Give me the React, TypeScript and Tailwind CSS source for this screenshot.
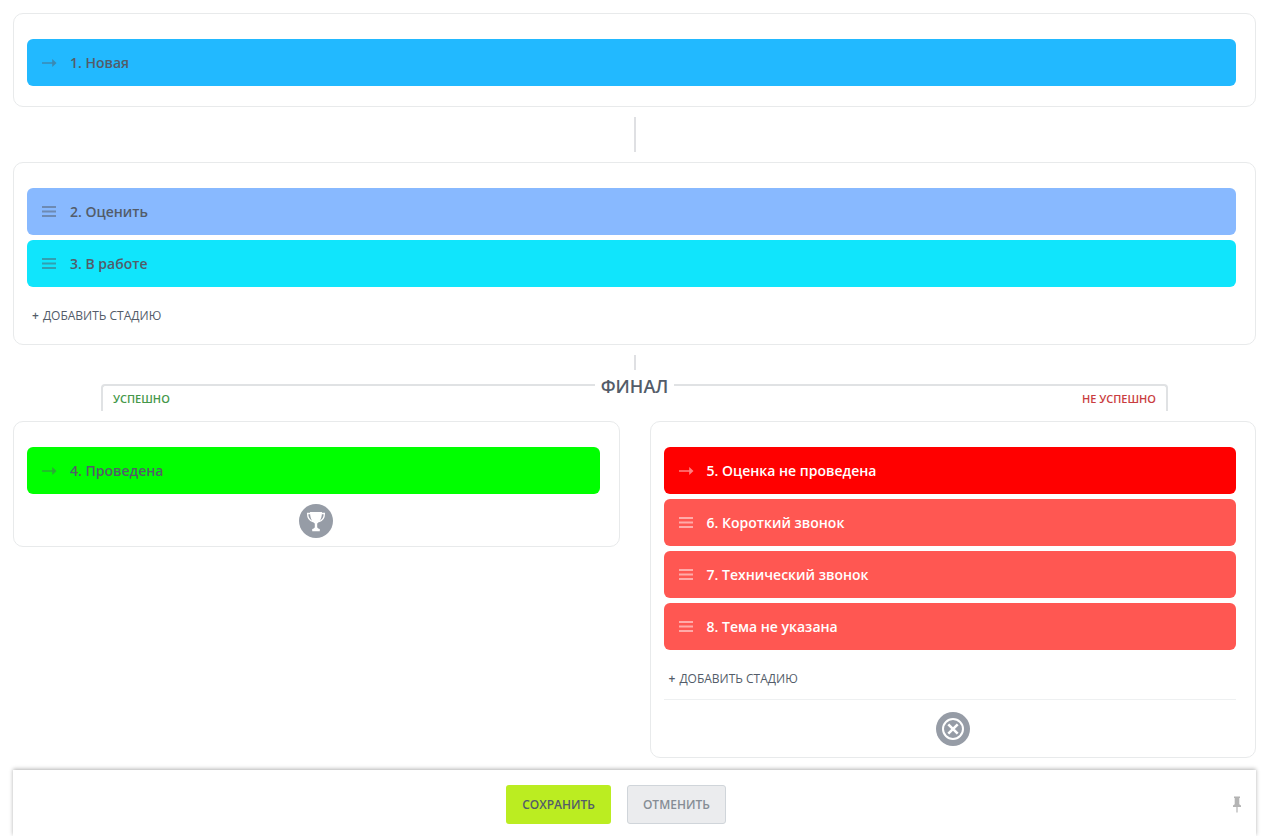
import type { ReactNode } from 'react';

type Stage = {
  id: number;
  name: string;
  fixed?: boolean;
  bg: string;
  light?: boolean;
};

const initialStages: Stage[] = [{ id: 1, name: 'Новая', fixed: true, bg: 'bg-[#22b9ff]' }];

const progressStages: Stage[] = [
  { id: 2, name: 'Оценить', bg: 'bg-[#88b9ff]' },
  { id: 3, name: 'В работе', bg: 'bg-[#10e5fc]' },
];

const successStages: Stage[] = [{ id: 4, name: 'Проведена', fixed: true, bg: 'bg-[#00ff00]' }];

const failStages: Stage[] = [
  { id: 5, name: 'Оценка не проведена', fixed: true, bg: 'bg-[#ff0000]', light: true },
  { id: 6, name: 'Короткий звонок', bg: 'bg-[#ff5752]', light: true },
  { id: 7, name: 'Технический звонок', bg: 'bg-[#ff5752]', light: true },
  { id: 8, name: 'Тема не указана', bg: 'bg-[#ff5752]', light: true },
];

function ArrowIcon() {
  return (
    <svg width="15" height="10" viewBox="0 0 15 10" fill="currentColor" aria-hidden="true">
      <path d="M0 4.200h10.200V1l4.300 4-4.300 4V5.800H0z" />
    </svg>
  );
}

function DragIcon() {
  return (
    <svg width="14" height="11" viewBox="0 0 14 11" fill="currentColor" aria-hidden="true">
      <path d="M0 0h14v1.900H0zM0 4.500h14v1.900H0zM0 9h14v1.900H0z" />
    </svg>
  );
}

function TrophyIcon() {
  return (
    <svg width="34" height="34" viewBox="0 0 34 34" aria-hidden="true">
      <circle cx="17" cy="17" r="17" fill="#969ca6" />
      <path
        fill="#fff"
        d="M11 8h12c0 6-2 9.700-4.800 11.500v3.500c0 1.200 1.300 1.600 2.600 2v2.200h-7.600V25c1.300-.4 2.600-.8 2.600-2v-3.500C13 17.700 11 14 11 8z"
      />
      <path
        fill="none"
        stroke="#fff"
        strokeWidth="1.300"
        d="M11.500 9.500H8.600c0 4.300 1.700 7 5.400 8.200M22.500 9.500h2.900c0 4.300-1.700 7-5.400 8.200"
      />
    </svg>
  );
}

function FailIcon() {
  return (
    <svg width="34" height="34" viewBox="0 0 34 34" fill="none" stroke="#fff" aria-hidden="true">
      <circle cx="17" cy="17" r="17" fill="#969ca6" stroke="none" />
      <circle cx="17" cy="17" r="10" strokeWidth="2" />
      <path strokeWidth="2.600" d="M12.300 12.300l9.400 9.400M21.700 12.300l-9.400 9.400" />
    </svg>
  );
}

function PinIcon() {
  return (
    <svg width="8" height="17" viewBox="0 0 8 17" fill="currentColor" aria-hidden="true">
      <path d="M1 .5h6V2H6.300v6.300L8 9.500V11H4.600v5.500H3.400V11H0V9.500l1.700-1.200V2H1z" />
    </svg>
  );
}

function StageRow({ stage }: { stage: Stage }) {
  return (
    <li
      className={`flex h-[47px] items-center rounded-md pl-[15px] ${stage.bg} ${
        stage.light ? 'text-white' : 'text-[#535c69]'
      }`}
    >
      <span className="w-7 opacity-50">{stage.fixed ? <ArrowIcon /> : <DragIcon />}</span>
      <span className="text-[14px] font-semibold">
        {stage.id}. {stage.name}
      </span>
    </li>
  );
}

function StageCard({ stages, children }: { stages: Stage[]; children?: ReactNode }) {
  return (
    <section className="rounded-[10px] border border-[#e8eaeb] pt-[25px] pr-[19px] pl-[13px]">
      <ul className="flex flex-col gap-[5px]">
        {stages.map((stage) => (
          <StageRow key={stage.id} stage={stage} />
        ))}
      </ul>
      {children}
    </section>
  );
}

function AddStage() {
  return (
    <button type="button" className="mt-[19px] ml-[5px] flex h-5 items-center gap-1 text-[12px] text-[#535c69]">
      <span className="font-semibold">+</span>
      ДОБАВИТЬ СТАДИЮ
    </button>
  );
}

export default function App() {
  return (
    <div className="flex min-h-screen flex-col bg-white pr-3 pl-[13px] font-['Open_Sans','Noto_Sans',sans-serif]">
      <main className="grow pt-[13px] pb-3">
        <StageCard stages={initialStages}>
          <div className="h-5" />
        </StageCard>

        <div className="mx-auto my-[10px] h-[35px] w-[2px] bg-[#dfe0e3]" />

        <StageCard stages={progressStages}>
          <AddStage />
          <div className="h-[18px]" />
        </StageCard>

        <div className="mx-auto mt-[10px] h-[15px] w-[2px] bg-[#dfe0e3]" />

        <div className="mx-[88px] mt-[6px] flex items-start">
          <div className="mt-2 h-[27px] flex-1 rounded-tl-sm border-t-2 border-l-2 border-[#e0e2e4] pt-[5px] pl-[10px] text-[11px] leading-4 font-semibold text-[#45984a]">
            УСПЕШНО
          </div>
          <h2 className="px-[6px] text-[18px] leading-5 font-semibold text-[#535c69]">ФИНАЛ</h2>
          <div className="mt-2 h-[27px] flex-1 rounded-tr-sm border-t-2 border-r-2 border-[#e0e2e4] pt-[5px] pr-[10px] text-right text-[11px] leading-4 font-semibold text-[#c93d40]">
            НЕ УСПЕШНО
          </div>
        </div>

        <div className="mt-[10px] grid grid-cols-2 items-start gap-[30px]">
          <StageCard stages={successStages}>
            <div className="flex justify-center pt-[10px] pb-2 pl-[6px]">
              <TrophyIcon />
            </div>
          </StageCard>
          <StageCard stages={failStages}>
            <AddStage />
            <div className="mt-[10px] flex justify-center border-t border-[#eef0f1] pt-3 pb-[11px] pl-[6px]">
              <FailIcon />
            </div>
          </StageCard>
        </div>
      </main>

      <footer className="sticky bottom-0 flex items-center bg-white pt-[15px] pb-3 shadow-[0_-1px_4px_rgba(0,0,0,0.3)]">
        <div className="flex flex-1 justify-center gap-4 pr-[14px]">
          <button
            type="button"
            className="h-[39px] rounded-[3px] bg-[#bbed21] px-4 text-[12px] font-semibold text-[#535c69]"
          >
            СОХРАНИТЬ
          </button>
          <button
            type="button"
            className="h-[39px] rounded-[3px] border border-[#d0d5da] bg-[#ebecee] px-[15px] text-[12px] font-semibold text-[#868d95]"
          >
            ОТМЕНИТЬ
          </button>
        </div>
        <button type="button" aria-label="Закрепить" className="mr-[15px] text-[#b4b4b4]">
          <PinIcon />
        </button>
      </footer>
    </div>
  );
}
